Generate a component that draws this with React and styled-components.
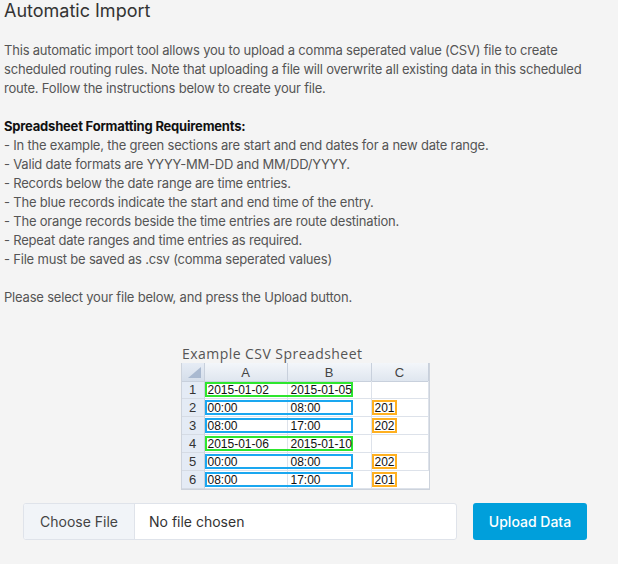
import React from 'react'
import styled, { createGlobalStyle } from 'styled-components'

const GlobalStyle = createGlobalStyle`
  html, body {
    margin: 0;
    padding: 0;
    background: #f4f4f4;
  }
  body {
    font-family: Inter, "Noto Sans", sans-serif;
  }
`

const Page = styled.div`
  width: 610px;
  padding: 0 0 0 4px;
  box-sizing: border-box;
  color: #555;
`

const Title = styled.h2`
  margin: 0;
  font-size: 18px;
  line-height: 22px;
  font-weight: 400;
  color: #333;
`

const Text = styled.p`
  margin: ${(p) => p.$top || 0}px 0 0;
  font-size: 13px;
  line-height: 19px;
  letter-spacing: -0.2px;
`

const Heading = styled.strong`
  font-weight: 700;
  color: #111;
`

const SheetBlock = styled.div`
  display: flex;
  flex-direction: column;
  align-items: center;
  margin-top: 38px;
  padding-right: 4px;
`

const SheetTitle = styled.div`
  width: 248px;
  font-family: "Open Sans", sans-serif;
  font-size: 14px;
  line-height: 18px;
  color: #555;
  letter-spacing: 0.45px;
  padding-left: 1px;
  box-sizing: border-box;
`

const Sheet = styled.div`
  display: grid;
  grid-template-columns: 23px 83px 84px 57px;
  grid-auto-rows: 18px;
  border: 1px solid #cdd3dc;
  border-top: 0;
  background: #fff;
  font-family: "Liberation Sans", Arial, sans-serif;
  font-size: 12px;
  color: #111;
`

const HeadCell = styled.div`
  height: 19px;
  display: flex;
  align-items: center;
  justify-content: center;
  background: linear-gradient(#f3f6fa, #dfe6ef);
  border-right: 1px solid #c8d0dc;
  border-bottom: 1px solid #c8d0dc;
  color: #444;
  font-size: 13px;
  box-sizing: border-box;
  &:last-child {
    border-right: 0;
  }
`

const Corner = styled(HeadCell)`
  position: relative;
  background: linear-gradient(#e6ecf5, #d5deea);
  &::after {
    content: '';
    position: absolute;
    right: 3px;
    bottom: 3px;
    border-left: 13px solid transparent;
    border-bottom: 11px solid #a9b9d0;
  }
`

const RowNum = styled.div`
  display: flex;
  align-items: center;
  justify-content: center;
  background: #e4ebf5;
  border-right: 1px solid #c8d0dc;
  border-bottom: 1px solid #d5dbe4;
  color: #333;
  font-size: 13px;
`

const Cell = styled.div`
  position: relative;
  border-right: 1px solid #dde2ea;
  border-bottom: 1px solid #dde2ea;
  display: flex;
  align-items: center;
  padding-left: 2px;
  &:last-child {
    border-right: 0;
  }
`

const Marker = styled.div`
  position: absolute;
  left: 0;
  top: 1px;
  width: ${(p) => p.$w}px;
  height: 15px;
  border: 2px solid ${(p) => p.$color};
  box-sizing: border-box;
  pointer-events: none;
`

const CellText = styled.span`
  position: relative;
  padding-left: 1px;
`

const UploadRow = styled.div`
  display: flex;
  align-items: center;
  justify-content: center;
  gap: 16px;
  margin-top: 13px;
  padding-right: 4px;
`

const FileField = styled.div`
  display: flex;
  width: 434px;
  height: 37px;
  border: 1px solid #dfe3ea;
  border-radius: 3px;
  background: #fff;
  box-sizing: border-box;
  overflow: hidden;
  font-size: 14px;
`

const ChooseButton = styled.div`
  display: flex;
  align-items: center;
  justify-content: center;
  width: 110px;
  background: #f1f4f8;
  border-right: 1px solid #dfe3ea;
  color: #444;
`

const FileName = styled.div`
  display: flex;
  align-items: center;
  padding-left: 14px;
  color: #333;
`

const UploadButton = styled.button`
  width: 114px;
  height: 37px;
  border: 0;
  border-radius: 3px;
  background: #009fdb;
  color: #fff;
  font-family: Inter, sans-serif;
  font-size: 14px;
  font-weight: 500;
`

const rows = [
  { n: 1, a: '2015-01-02', b: '2015-01-05', c: '', kind: 'date' },
  { n: 2, a: '00:00', b: '08:00', c: '201', kind: 'time' },
  { n: 3, a: '08:00', b: '17:00', c: '202', kind: 'time' },
  { n: 4, a: '2015-01-06', b: '2015-01-10', c: '', kind: 'date' },
  { n: 5, a: '00:00', b: '08:00', c: '202', kind: 'time' },
  { n: 6, a: '08:00', b: '17:00', c: '201', kind: 'time' },
]

const rules = [
  'In the example, the green sections are start and end dates for a new date range.',
  'Valid date formats are YYYY-MM-DD and MM/DD/YYYY.',
  'Records below the date range are time entries.',
  'The blue records indicate the start and end time of the entry.',
  'The orange records beside the time entries are route destination.',
  'Repeat date ranges and time entries as required.',
  'File must be saved as .csv (comma seperated values)',
]

function SpreadSheet() {
  return (
    <SheetBlock>
      <SheetTitle>Example CSV Spreadsheet</SheetTitle>
      <Sheet>
        <Corner />
        <HeadCell>A</HeadCell>
        <HeadCell>B</HeadCell>
        <HeadCell>C</HeadCell>
        {rows.map((r) => (
          <React.Fragment key={r.n}>
            <RowNum>{r.n}</RowNum>
            <Cell>
              <Marker $w={148} $color={r.kind === 'date' ? '#2ee62e' : '#1aa7f0'} />
              <CellText>{r.a}</CellText>
            </Cell>
            <Cell>
              <CellText>{r.b}</CellText>
            </Cell>
            <Cell>
              {r.c && <Marker $w={25} $color="#ffb020" />}
              <CellText>{r.c}</CellText>
            </Cell>
          </React.Fragment>
        ))}
      </Sheet>
    </SheetBlock>
  )
}

export default function App() {
  return (
    <>
      <GlobalStyle />
      <Page>
        <Title>Automatic Import</Title>
        <Text $top={19}>
          This automatic import tool allows you to upload a comma seperated value (CSV) file to create
          scheduled routing rules. Note that uploading a file will overwrite all existing data in this
          scheduled route. Follow the instructions below to create your file.
        </Text>
        <Text $top={19}>
          <Heading>Spreadsheet Formatting Requirements:</Heading>
          {rules.map((r) => (
            <React.Fragment key={r}>
              <br />- {r}
            </React.Fragment>
          ))}
          <br />
          <br />
          Please select your file below, and press the Upload button.
        </Text>
        <SpreadSheet />
        <UploadRow>
          <FileField>
            <ChooseButton>Choose File</ChooseButton>
            <FileName>No file chosen</FileName>
          </FileField>
          <UploadButton>Upload Data</UploadButton>
        </UploadRow>
      </Page>
    </>
  )
}
